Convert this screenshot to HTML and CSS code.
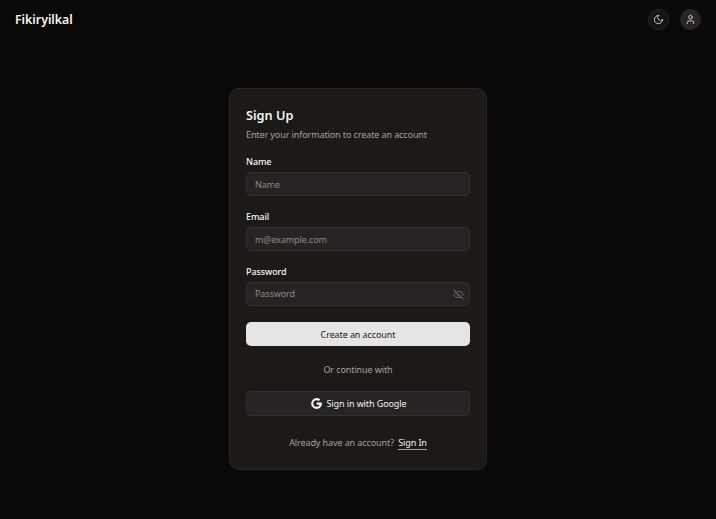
FILE: index.html
```html
<!DOCTYPE html>
<html lang="en">
<head>
<meta charset="UTF-8">
<meta name="viewport" content="width=device-width, initial-scale=1.0">
<title>Sign Up - Fikiryilkal</title>
<link rel="stylesheet" href="styles.css">
</head>
<body>
<header class="topbar">
    <a class="brand" href="#">Fikiryilkal</a>
    <div class="top-actions">
        <button class="round-btn" type="button" aria-label="Theme">
            <svg class="icon" viewBox="0 0 24 24"><path d="M12 3a6 6 0 0 0 9 9 9 9 0 1 1-9-9Z"/></svg>
        </button>
        <button class="round-btn round-btn-filled" type="button" aria-label="Account">
            <svg class="icon" viewBox="0 0 24 24"><path d="M19 21v-2a4 4 0 0 0-4-4H9a4 4 0 0 0-4 4v2"/><circle cx="12" cy="7" r="4"/></svg>
        </button>
    </div>
</header>

<main class="page">
    <form class="card">
        <h1 class="title">Sign Up</h1>
        <p class="subtitle">Enter your information to create an account</p>

        <div class="field">
            <label class="label" for="name">Name</label>
            <input class="input" id="name" type="text" placeholder="Name">
        </div>

        <div class="field">
            <label class="label" for="email">Email</label>
            <input class="input" id="email" type="email" placeholder="m@example.com">
        </div>

        <div class="field">
            <label class="label" for="password">Password</label>
            <div class="input-wrap">
                <input class="input input-password" id="password" type="password" placeholder="Password">
                <svg class="icon eye" viewBox="0 0 24 24"><path d="M10.7 5.1A10.7 10.7 0 0 1 22 12a13 13 0 0 1-1.7 2.4"/><path d="M14.1 14.2a3 3 0 0 1-4.2-4.2"/><path d="M17.5 17.5A10.8 10.8 0 0 1 2 12a13.5 13.5 0 0 1 4.4-5.5"/><path d="m2 2 20 20"/></svg>
            </div>
        </div>

        <button class="btn btn-primary" type="button">Create an account</button>
        <p class="divider">Or continue with</p>
        <button class="btn btn-google" type="button">
            <svg class="google" viewBox="0 0 24 24"><path d="M12.2 10.3v3.9h5.5c-.7 2.3-2.7 3.8-5.5 3.8a6 6 0 1 1 0-12c1.5 0 2.9.5 3.9 1.5l2.9-2.9A10.1 10.1 0 0 0 12.2 2a10 10 0 1 0 0 20c5.800 0 9.800-4.100 9.800-9.800 0-.7-.1-1.300-.2-1.900Z"/></svg>
            Sign in with Google
        </button>
        <p class="signin">Already have an account? <a class="signin-link" href="#">Sign In</a></p>
    </form>
</main>
</body>
</html>
```

FILE: styles.css
```css
*{box-sizing:border-box;}
body{
    margin:0;
    height:519px;
    overflow:hidden;
    background:#0a0908;
    color:#f5f5f4;
    font-family:"Noto Sans",sans-serif;
    font-size:9px;
    letter-spacing:-0.1px;
}
.topbar{
    display:flex;
    align-items:center;
    justify-content:space-between;
    height:38px;
    padding:0 15px;
}
.brand{font-size:12.3px;font-weight:600;letter-spacing:0;color:#f5f5f4;text-decoration:none;}
.top-actions{display:flex;gap:11px;}
.round-btn{
    display:flex;
    align-items:center;
    justify-content:center;
    width:21px;
    height:21px;
    padding:0;
    border:1px solid #292524;
    border-radius:50%;
    background:#171514;
    color:#d6d3d1;
}
.round-btn-filled{background:#292524;}
.icon{
    width:11px;
    height:11px;
    fill:none;
    stroke:currentColor;
    stroke-width:2;
    stroke-linecap:round;
    stroke-linejoin:round;
}
.page{display:flex;justify-content:center;padding-top:50px;}
.card{
    width:258px;
    height:382px;
    padding:18px 16px;
    border:1px solid #2a2725;
    border-radius:10px;
    background:#1c1917;
}
.title{margin:0;font-size:12.7px;font-weight:600;letter-spacing:0;line-height:17px;}
.subtitle{margin:4px 0 0;color:#a8a29e;line-height:14px;}
.field{margin-top:13px;}
.field + .field{margin-top:14px;}
.label{display:block;margin-bottom:3px;font-weight:500;line-height:14px;}
.input-wrap{position:relative;}
.input{
    display:block;
    width:100%;
    height:24px;
    padding:0 8px;
    border:1px solid #353130;
    border-radius:5px;
    outline:none;
    background:#262322;
    color:#f5f5f4;
    font:inherit;
    letter-spacing:inherit;
}
.input-password{padding-bottom:2px;}
.input::placeholder{color:#8f8a86;}
.eye{position:absolute;top:6.5px;right:6px;color:#78736f;}
.btn{
    display:flex;
    align-items:center;
    justify-content:center;
    width:100%;
    height:24px;
    border-radius:5px;
    font:inherit;
    letter-spacing:inherit;
}
.btn-primary{margin-top:16px;border:none;background:#e7e5e4;color:#1c1917;}
.divider{margin:17px 0 0;color:#a8a29e;line-height:14px;text-align:center;}
.btn-google{
    gap:4px;
    height:25px;
    margin-top:14px;
    border:1px solid #353130;
    background:#262322;
    color:#f5f5f4;
}
.google{width:13px;height:13px;fill:#f5f5f4;}
.signin{margin:20px 0 0;color:#a8a29e;line-height:14px;text-align:center;}
.signin-link{margin-left:2px;color:#f5f5f4;text-decoration:none;border-bottom:1px solid #a8a29e;}
```
